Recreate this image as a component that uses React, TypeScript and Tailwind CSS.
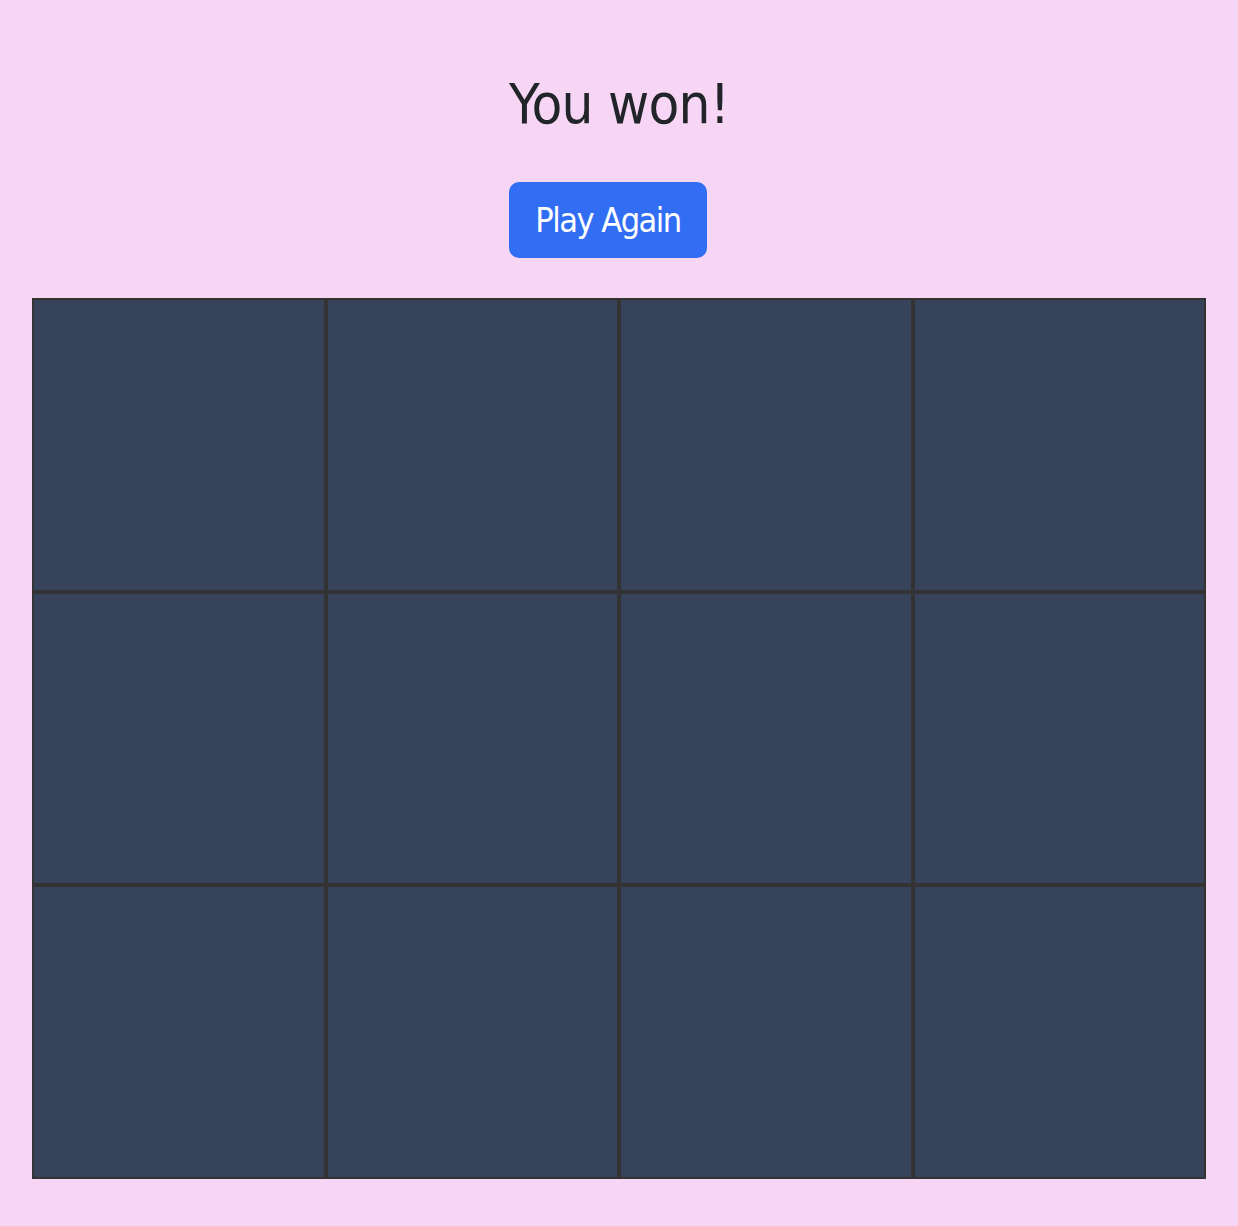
const cells = Array.from({ length: 12 }, (_, i) => i);

export default function App() {
    return (
        <div className="min-h-screen bg-[#f7d6f5] px-8 pt-[70px] pb-[47px] text-center [font-family:'DejaVu_Sans_Condensed','DejaVu_Sans',sans-serif]">
            <h1 className="text-[56px] leading-[67px] text-[#212529] tracking-[-0.75px]">You won!</h1>
            <button
                type="button"
                className="mt-[45px] mr-[22px] rounded-[10px] bg-[#326ef4] px-[26px] py-[18px] text-[34px] leading-[40px] text-white tracking-[-1.5px]">
                Play Again
            </button>
            <div className="mt-[40px] grid grid-cols-4">
                {cells.map(i => (
                    <div key={i} className="aspect-square border-2 border-[#333] bg-[#37435a]" />
                ))}
            </div>
        </div>
    );
}
